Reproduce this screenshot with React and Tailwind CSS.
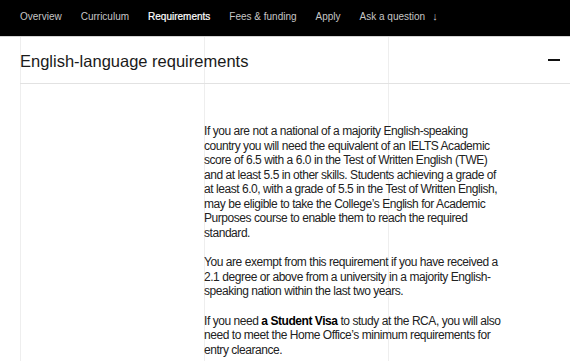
import { Fragment } from "react";

const tabs = [
  { label: "Overview" },
  { label: "Curriculum" },
  { label: "Requirements", active: true },
  { label: "Fees & funding" },
  { label: "Apply" },
  { label: "Ask a question", arrow: true },
];

const firstPara = [
  "If you are not a national of a majority English-speaking",
  "country you will need the equivalent of an IELTS Academic",
  "score of 6.5 with a 6.0 in the Test of Written English (TWE)",
  "and at least 5.5 in other skills. Students achieving a grade of",
  "at least 6.0, with a grade of 5.5 in the Test of Written English,",
  "may be eligible to take the College’s English for Academic",
  "Purposes course to enable them to reach the required",
  "standard.",
];

const secondPara = [
  "You are exempt from this requirement if you have received a",
  "2.1 degree or above from a university in a majority English-",
  "speaking nation within the last two years.",
];

function Lines({ lines }) {
  return lines.map((line, i) => (
    <Fragment key={i}>
      {line}
      {i < lines.length - 1 ? <br /> : null}
    </Fragment>
  ));
}

export default function App() {
  return (
    <div className="min-h-screen bg-white font-['Liberation_Sans',Arial,sans-serif]">
      <nav className="flex h-[37px] items-center gap-[19px] border-b border-[#d4d4d4] bg-black px-5 pb-1 text-[10px] text-[#c6c6c6]">
        {tabs.map((tab) => (
          <span key={tab.label} className={tab.active ? "text-white [-webkit-text-stroke:0.2px_white]" : ""}>
            {tab.label}
            {tab.arrow ? <span className="ml-[7px] text-[11px]">↓</span> : null}
          </span>
        ))}
      </nav>

      <main className="min-h-[324px] bg-[linear-gradient(to_right,#eeeeee_1px,transparent_1px)] bg-[length:184px_100%] bg-[position:20px_0] bg-repeat-x">
        <section className="ml-5">
          <div className="flex h-[47px] items-center justify-between border-b border-[#e2e2e2] pt-[3px] pr-[10px]">
            <h2 className="text-[16.5px] text-[#1a1a1a]">English-language requirements</h2>
            <span className="mb-[3px] block h-[1.5px] w-3 bg-[#111]" />
          </div>

          <div className="grid grid-cols-[184px_1fr] pt-[40px]">
            <div />
            <div className="space-y-[15px] text-[12px] leading-[14.5px] tracking-[-0.45px] text-[#222]">
              <p>
                <Lines lines={firstPara} />
              </p>
              <p>
                <Lines lines={secondPara} />
              </p>
              <p>
                If you need <strong className="font-bold text-black">a Student Visa</strong> to study at the RCA, you will also
                <br />
                need to meet the Home Office’s minimum requirements for
                <br />
                entry clearance.
              </p>
            </div>
          </div>
        </section>
      </main>
    </div>
  );
}
